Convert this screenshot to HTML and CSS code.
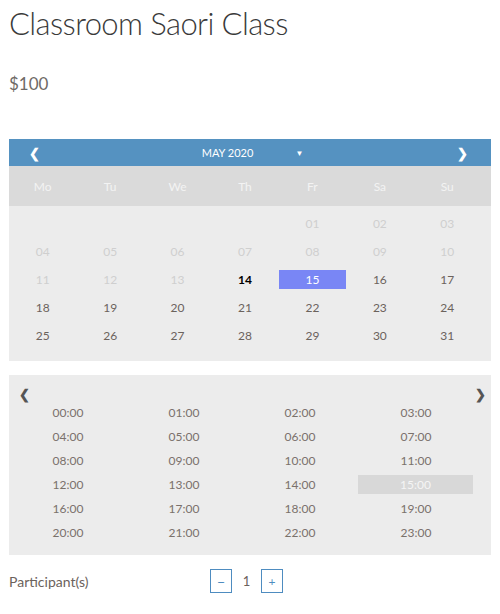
FILE: index.html
```html
<!DOCTYPE html>
<html>
<head>
<meta charset="utf-8">
<link rel="stylesheet" href="styles.css">
</head>
<body>
<div class="page">
  <h1 class="title">Classroom Saori Class</h1>
  <p class="price">$100</p>

  <div class="cal">
    <div class="cal-head">
      <span class="nav">&#10094;</span>
      <span class="month-group"><span class="month">MAY 2020</span><span class="caret">&#9660;</span></span>
      <span class="nav">&#10095;</span>
    </div>
    <div class="weekdays">
      <span>Mo</span><span>Tu</span><span>We</span><span>Th</span><span>Fr</span><span>Sa</span><span>Su</span>
    </div>
    <div class="days">
      <span></span><span></span><span></span><span></span>
      <span class="off">01</span><span class="off">02</span><span class="off">03</span>
      <span class="off">04</span><span class="off">05</span><span class="off">06</span><span class="off">07</span><span class="off">08</span><span class="off">09</span><span class="off">10</span>
      <span class="off">11</span><span class="off">12</span><span class="off">13</span><span class="today">14</span><span class="sel">15</span><span>16</span><span>17</span>
      <span>18</span><span>19</span><span>20</span><span>21</span><span>22</span><span>23</span><span>24</span>
      <span>25</span><span>26</span><span>27</span><span>28</span><span>29</span><span>30</span><span>31</span>
    </div>
  </div>

  <div class="times">
    <div class="times-nav"><span class="tnav">&#10094;</span><span class="tnav">&#10095;</span></div>
    <div class="time-grid">
      <span>00:00</span><span>01:00</span><span>02:00</span><span>03:00</span>
      <span>04:00</span><span>05:00</span><span>06:00</span><span>07:00</span>
      <span>08:00</span><span>09:00</span><span>10:00</span><span>11:00</span>
      <span>12:00</span><span>13:00</span><span>14:00</span><span class="tsel">15:00</span>
      <span>16:00</span><span>17:00</span><span>18:00</span><span>19:00</span>
      <span>20:00</span><span>21:00</span><span>22:00</span><span>23:00</span>
    </div>
  </div>

  <div class="participants">
    <span class="plabel">Participant(s)</span>
    <div class="qty">
      <button class="qbtn minus">&minus;</button>
      <span class="qval">1</span>
      <button class="qbtn">+</button>
    </div>
  </div>
</div>
</body>
</html>
```
FILE: styles.css
```css
html, body {
  margin: 0;
  padding: 0;
  background: #fff;
}
body {
  font-family: "Lato", "Liberation Sans", sans-serif;
}
.page {
  padding: 0 9px;
}
.title {
  margin: 0;
  padding-top: 3px;
  font-size: 31px;
  letter-spacing: -0.6px;
  font-weight: 300;
  line-height: 40px;
  color: #3a3a3a;
}
.price {
  margin: 29px 0 0;
  font-size: 17px;
  line-height: 24px;
  color: #6f6a66;
}
.cal {
  margin-top: 43px;
}
.cal-head {
  height: 27px;
  background: #5592c1;
  color: #fff;
  display: flex;
  align-items: center;
  justify-content: space-between;
  padding: 0 23px 0 20px;
}
.nav {
  font-size: 13px;
  font-weight: 700;
}
.month-group {
  display: flex;
  align-items: center;
  gap: 42px;
  margin-left: 8px;
}
.month {
  font-size: 11px;
}
.caret {
  font-size: 8px;
}
.weekdays {
  height: 40px;
  background: #dadada;
  display: grid;
  grid-template-columns: repeat(7, 1fr);
  padding-right: 10px;
  align-items: center;
  text-align: center;
  color: #f3f3f3;
  font-size: 12px;
}
.days {
  background: #ececec;
  display: grid;
  grid-template-columns: repeat(7, 1fr);
  grid-auto-rows: 19px;
  row-gap: 9px;
  padding: 8px 10px 16px 0;
  font-size: 12px;
  color: #6b625c;
}
.days span {
  display: flex;
  align-items: center;
  justify-content: center;
}
.days .off {
  color: #cfcfcf;
}
.days .today {
  color: #000;
  font-weight: 700;
}
.days .sel {
  background: #7986f5;
  color: #fff;
}
.times {
  margin-top: 14px;
  background: #ececec;
  padding: 9px 11px 13px 1px;
}
.times-nav {
  display: flex;
  justify-content: space-between;
  height: 19px;
  align-items: center;
  padding-left: 9px;
  margin-right: -6px;
}
.tnav {
  font-size: 13px;
  font-weight: 700;
  color: #555;
}
.time-grid {
  display: grid;
  grid-template-columns: repeat(4, 116px);
  grid-auto-rows: 19px;
  row-gap: 5px;
  font-size: 12px;
  color: #7a716b;
}
.time-grid span {
  display: flex;
  align-items: center;
  justify-content: center;
}
.time-grid .tsel {
  background: #d8d8d8;
  color: #f5f5f5;
  margin-right: 1px;
}
.participants {
  display: grid;
  grid-template-columns: 201px auto;
  align-items: center;
  margin-top: 14px;
}
.plabel {
  font-size: 14px;
  color: #6b625c;
}
.qty {
  display: flex;
  align-items: center;
}
.qbtn {
  width: 22px;
  height: 24px;
  border: 1px solid #4e8cc0;
  background: #fff;
  color: #4e8cc0;
  font-family: "Lato", "Liberation Sans", sans-serif;
  font-size: 12px;
  padding: 0;
  margin: 0;
}
.qbtn.minus {
  font-size: 14px;
}
.qval {
  width: 29px;
  text-align: center;
  font-size: 13px;
  color: #6b625c;
}
```
